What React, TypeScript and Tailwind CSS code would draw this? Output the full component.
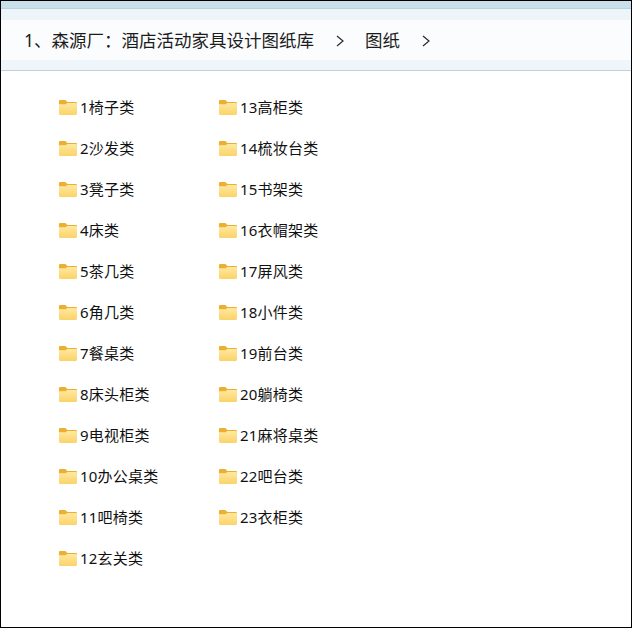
const font = { fontFamily: '"Noto Sans", "Noto Sans CJK SC", sans-serif' };

const folders = [
  '1椅子类', '2沙发类', '3凳子类', '4床类', '5茶几类', '6角几类', '7餐桌类', '8床头柜类',
  '9电视柜类', '10办公桌类', '11吧椅类', '12玄关类', '13高柜类', '14梳妆台类', '15书架类',
  '16衣帽架类', '17屏风类', '18小件类', '19前台类', '20躺椅类', '21麻将桌类', '22吧台类', '23衣柜类',
];

function FolderIcon() {
  return (
    <svg width="18" height="15" viewBox="0 0 18 15" className="shrink-0">
      <defs>
        <linearGradient id="folderFront" x1="0" y1="0" x2="0" y2="1">
          <stop offset="0" stopColor="#ffe9a0" />
          <stop offset="1" stopColor="#fbd268" />
        </linearGradient>
      </defs>
      <path d="M0 1.2C0 .5.5 0 1.2 0h4.6c.4 0 .7.1 1 .4L8.4 2h8.4c.7 0 1.2.5 1.2 1.2V5H0z" fill="#ebb032" />
      <path d="M0 4.2h6.6l1.6-1.2h8.6c.7 0 1.2.5 1.2 1.2v9.6c0 .7-.5 1.2-1.2 1.2H1.2C.5 15 0 14.500 0 13.800z" fill="url(#folderFront)" />
    </svg>
  );
}

function Chevron() {
  return (
    <svg width="8" height="12" viewBox="0 0 8 12" fill="none" stroke="#2a2a2a" strokeWidth="1.200" className="shrink-0">
      <path d="M1 1l6 5-6 5" />
    </svg>
  );
}

export default function App() {
  return (
    <div className="w-[632px] h-[628px] bg-white border border-black flex flex-col overflow-hidden" style={font}>
      {/* Breadcrumb */}
      <div className="h-[70px] shrink-0 flex flex-col border-b border-[#c3d0db]">
        <div className="h-2 bg-[#c9dfea] border-b border-[#b9d0e2]" />
        <div className="h-[11px] bg-[#eef5f9]" />
        <div className="flex-1 bg-[#fbfcfe] flex items-center pl-[23px] pt-[1px] text-[17.5px] text-[#1c1c1c]">
          <span className="w-[291px] whitespace-nowrap">1、森源厂：酒店活动家具设计图纸库</span>
          <span className="ml-[21px]"><Chevron /></span>
          <span className="ml-[21px]">图纸</span>
          <span className="ml-[22px]"><Chevron /></span>
        </div>
        <div className="h-[10px] bg-[#eef5fb]" />
      </div>

      {/* Folder list */}
      <div className="grid grid-flow-col grid-rows-12 grid-cols-[160px_160px] auto-rows-[41px] pl-[58px] pt-[16px]">
        {folders.map((name) => (
          <div key={name} className="h-[41px] flex items-center gap-[3px] text-[15px] tracking-[0.2px] text-[#111111]">
            <FolderIcon />
            <span className="whitespace-nowrap pb-[1px]">{name}</span>
          </div>
        ))}
      </div>
    </div>
  );
}
